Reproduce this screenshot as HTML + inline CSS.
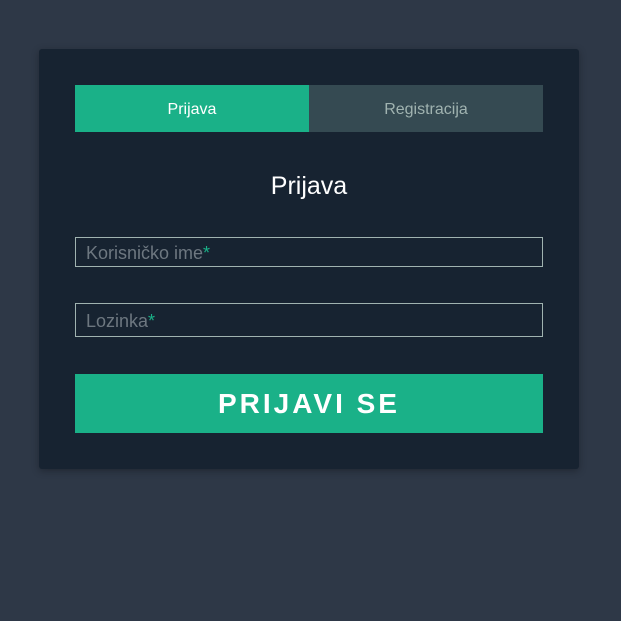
<!DOCTYPE html>
<html><head><style>
body{margin:0;width:621px;height:621px;background:#2e3847;font-family:"Liberation Sans",sans-serif;position:relative;overflow:hidden}
.card{position:absolute;left:39px;top:49px;width:540px;height:420px;background:#172331;border-radius:3px;box-shadow:0 2px 8px rgba(0,0,0,.3)}
.tab{position:absolute;top:36px;height:47px;line-height:50px;text-align:center;font-size:16px}
.t1{left:36px;width:234px;background:#1ab188;color:#fff}
.t2{left:270px;width:234px;background:#354a52;color:#a0b3b0}
h1{position:absolute;top:123px;left:0;width:540px;text-align:center;margin:0;font-weight:300;font-size:25px;color:#fff}
.in{position:absolute;left:36px;width:468px;border:1px solid #a0b3b0;color:#6d7780;font-size:18px;padding-left:10px;box-sizing:border-box}
.in span{color:#1ab188}
.btn{position:absolute;left:36px;top:325px;width:468px;height:59px;background:#1ab188;color:#fff;font-weight:bold;font-size:28px;letter-spacing:3px;text-align:center;line-height:59px}
</style></head><body>
<div class="card">
<div class="tab t1">Prijava</div><div class="tab t2">Registracija</div>
<h1>Prijava</h1>
<div class="in" style="top:188px;height:30px;line-height:30px">Korisničko ime<span>*</span></div>
<div class="in" style="top:254px;height:34px;line-height:34px">Lozinka<span>*</span></div>
<div class="btn">PRIJAVI SE</div>
</div>
</body></html>
